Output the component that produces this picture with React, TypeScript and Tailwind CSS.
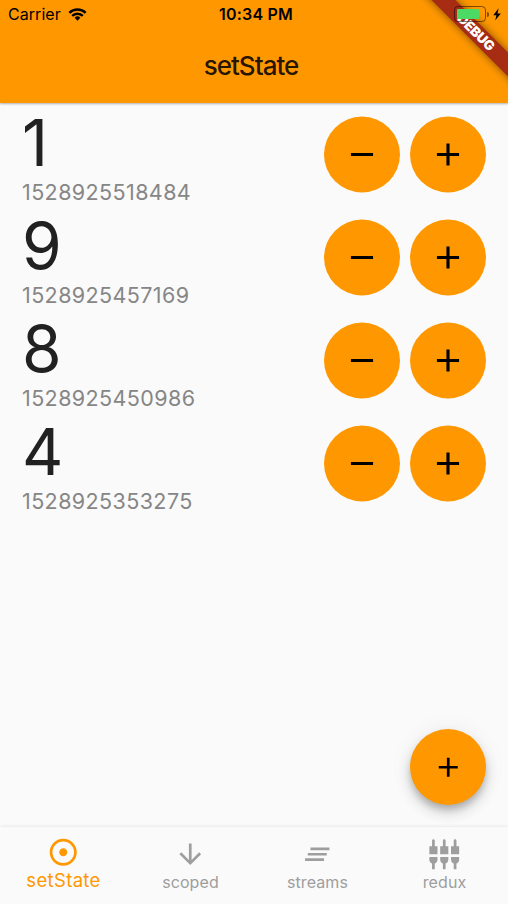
import React from "react";
import {
  MdAdd,
  MdAdjust,
  MdArrowDownward,
  MdClearAll,
  MdRemove,
  MdSettingsInputComponent,
} from "react-icons/md";

const counters = [
  { value: 1, id: "1528925518484" },
  { value: 9, id: "1528925457169" },
  { value: 8, id: "1528925450986" },
  { value: 4, id: "1528925353275" },
];

const tabs = [
  { label: "scoped", Icon: MdArrowDownward },
  { label: "streams", Icon: MdClearAll },
  { label: "redux", Icon: MdSettingsInputComponent },
];

function WifiIcon() {
  return (
    <svg viewBox="0 0 20 14" className="h-[13px] w-[19px]" fill="none" stroke="#000" strokeWidth="2.6">
      <path d="M1.2 5.2a12.4 12.4 0 0 1 17.6 0" />
      <path d="M4.3 8.5a8.1 8.1 0 0 1 11.4 0" />
      <path d="M10 13.6 6.9 10.5a4.4 4.4 0 0 1 6.2 0z" fill="#000" stroke="none" />
    </svg>
  );
}

function Battery() {
  return (
    <div className="flex items-center">
      <div className="h-[16px] w-[32px] rounded-[4px] border border-black/50 p-[2px]">
        <div className="h-full w-[22px] rounded-[1px] bg-[#4cd964]" />
      </div>
      <div className="ml-[1px] h-[5px] w-[2px] rounded-r-full bg-black/50" />
      <svg viewBox="0 0 8 13" className="ml-[4px] h-[13px] w-[8px]">
        <path d="M5.6 0.2 0.3 7.3h3.1L2.2 12.6 7.8 5.4H4.5z" fill="#000" />
      </svg>
    </div>
  );
}

function Round({ children }: { children: React.ReactNode }) {
  return (
    <button className="flex size-[76px] items-center justify-center rounded-full bg-[#ff9800] text-black">
      {children}
    </button>
  );
}

export default function App() {
  return (
    <div className="relative flex h-[904px] w-[508px] flex-col overflow-hidden bg-[#fafafa] font-['Inter','Liberation_Sans',sans-serif]">
      <header className="relative z-10 h-[103px] shrink-0 bg-[#ff9800] shadow-[0_1px_2px_rgba(0,0,0,0.3)]">
        <div className="grid h-[27px] grid-cols-3 items-center pt-[1px] text-black">
          <div className="flex items-center gap-[7px] pl-[8px]">
            <span className="text-[16px] leading-[20px] tracking-[0.05px]">Carrier</span>
            <WifiIcon />
          </div>
          <div className="pl-[4px] text-center text-[16px] leading-[20px] font-semibold tracking-[0.2px] whitespace-nowrap">
            10:34 PM
          </div>
        </div>
        <h1 className="flex h-[76px] items-center justify-center pt-[1px] pr-[6px] text-[26px] font-medium tracking-[-1px] text-black/87">
          setState
        </h1>
      </header>

      <div className="pointer-events-none absolute top-0 right-0 z-20 size-[110px] overflow-hidden">
        <div className="absolute top-[23.5px] left-[-2.5px] flex h-[17px] w-[160px] rotate-45 items-center justify-center bg-[#a62c14] text-[13.5px] font-black tracking-[-0.2px] text-white shadow-[0_0_8px_rgba(0,0,0,0.5)]">
          DEBUG
        </div>
      </div>
      <div className="absolute top-[6px] right-[7px] z-30">
        <Battery />
      </div>

      <main className="flex-1">
        {counters.map((c) => (
          <div key={c.id} className="flex h-[103px] items-center justify-between pr-[22px] pl-[22px]">
            <div className="flex h-full flex-col">
              <div className="mt-[11px] h-[67px] text-[64px] leading-[58px] text-[#212121]">{c.value}</div>
              <div className="text-[21.5px] leading-[28px] tracking-[0.4px] text-[#868686]">{c.id}</div>
            </div>
            <div className="flex -translate-y-[0.5px] gap-[10.5px]">
              <Round>
                <MdRemove size={38} />
              </Round>
              <Round>
                <MdAdd size={38} />
              </Round>
            </div>
          </div>
        ))}
      </main>

      <button className="absolute top-[729px] right-[22px] flex size-[76px] items-center justify-center rounded-full bg-[#ff9800] text-black shadow-[0_5px_7px_-1px_rgba(0,0,0,0.2),0_8px_14px_rgba(0,0,0,0.14),0_1px_24px_rgba(0,0,0,0.06)]">
        <MdAdd size={32.5} />
      </button>

      <nav className="z-10 grid h-[77px] shrink-0 grid-cols-4 bg-[#fafafa] shadow-[0_-1px_3px_rgba(0,0,0,0.07)]">
        <div className="flex flex-col items-center pt-[9px] text-[#ff9800]">
          <MdAdjust size={32.5} />
          <span className="text-[18.5px] leading-[22px] tracking-[0.35px]">setState</span>
        </div>
        {tabs.map(({ label, Icon }) => (
          <div key={label} className="flex flex-col items-center pt-[10.5px] text-[#9e9e9e]">
            <Icon size={32.5} />
            <span className="mt-[1.5px] text-[16px] leading-[20px] tracking-[0.1px]">{label}</span>
          </div>
        ))}
      </nav>
    </div>
  );
}
